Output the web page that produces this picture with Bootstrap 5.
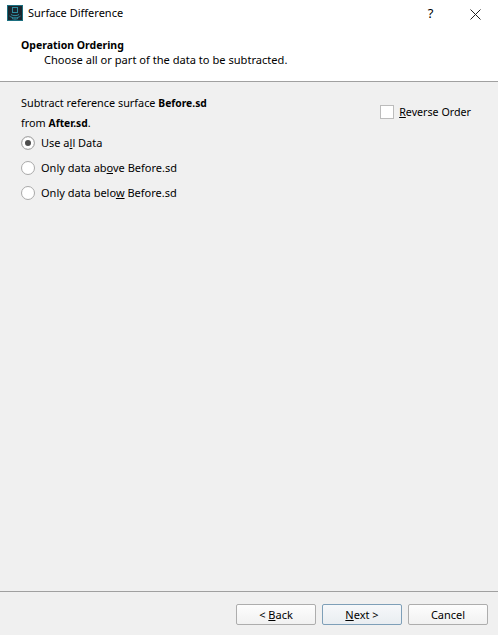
<!DOCTYPE html>
<html lang="en-US">
<head>
    <meta charset="UTF-8">
    <meta name="viewport" content="width=device-width, initial-scale=1.0">
    <title>Surface Difference</title>
    <link href="https://cdn.jsdelivr.net/npm/bootstrap@5.3.3/dist/css/bootstrap.min.css" rel="stylesheet">
    <style>
        html, body {
            height: 100%;
        }
        body {
            background-color: #f0f0f0;
            color: #000;
            font-family: "Noto Sans", "Open Sans", sans-serif;
            font-size: 11px;
            line-height: 16px;
        }
        .dlg {
            height: 635px;
        }
        .dlg-head {
            height: 82px;
            background-color: #fff;
            border-bottom: 1px solid #a0a0a0;
        }
        .title-row {
            height: 26px;
            padding-left: 7px;
            font-size: 11px;
        }
        .win-btn {
            width: 45px;
            text-align: center;
            font-size: 13px;
        }
        .head-text {
            padding-left: 21px;
            padding-top: 11px;
        }
        .head-title {
            font-size: 10.5px;
            font-weight: 700;
        }
        .head-sub {
            padding-left: 23px;
            line-height: 14px;
            font-size: 11.1px;
        }
        .dlg-body {
            padding: 11px 27px 0 21px;
        }
        .ref-text {
            font-size: 10.85px;
            line-height: 19px;
            margin-bottom: -3px;
        }
        .ref-text b {
            font-size: 10.3px;
        }
        .dlg-body .form-check {
            display: flex;
            align-items: center;
            min-height: 0;
            height: 25px;
            padding-left: 0;
            margin: 0;
        }
        .dlg-body .form-check.reverse-box {
            margin-top: 6px;
            font-size: 10.7px;
        }
        .dlg-body .form-check .form-check-input {
            float: none;
            margin: 0 6px 0 0;
            width: 14px;
            height: 14px;
            background-color: #fff;
            border: 1px solid #a9a9a9;
            box-shadow: none;
        }
        .dlg-body .form-check .form-check-input[type=radio]:checked {
            background-image: none;
            background-color: #fff;
            border-color: #a9a9a9;
            box-shadow: inset 0 0 0 3px #fff, inset 0 0 0 7px #4d4d4d;
        }
        .dlg-body .form-check .form-check-input[type=checkbox] {
            border-radius: 0;
            border-color: #bcbcbc;
            margin-right: 5px;
        }
        .dlg-foot {
            height: 44px;
            border-top: 1px solid #a0a0a0;
            padding: 12px 10px 0 0;
            column-gap: 6px;
        }
        .wiz-btn {
            width: 80px;
            height: 21px;
            padding: 0;
            font-size: 11px;
            line-height: 17px;
            color: #000;
            background: linear-gradient(#fdfdfd, #f1f1f1);
            border: 1px solid #adadad;
            border-radius: 2px;
        }
        .wiz-btn.is-default {
            border-color: #7e9fb8;
            background: linear-gradient(#f6f8fa, #e9edf1);
        }
        .title-icon {
            margin-right: 5px;
        }
    </style>
</head>
<body>
    <div class="dlg d-flex flex-column">
        <!-- Title and page header -->
        <div class="dlg-head">
            <div class="title-row d-flex align-items-center">
                <svg width="16" height="16" viewBox="0 0 16 16" class="title-icon flex-shrink-0">
                    <rect width="16" height="16" fill="#1b6f80"/>
                    <rect x="1" y="1" width="14" height="14" fill="#1a262e"/>
                    <rect x="5.500" y="2.500" width="5" height="5" fill="none" stroke="#2f8ea0"/>
                    <path d="M4 9.500c2 1.500 6 1.500 8 0M2.500 11c3 2.500 8 2.500 11 0M5 13.500c2 .8 4 .8 6 0" fill="none" stroke="#2f8ea0"/>
                </svg>
                <span class="flex-grow-1">Surface Difference</span>
                <span class="win-btn">?</span>
                <span class="win-btn">
                    <svg width="11" height="11" viewBox="0 0 11 11"><path d="M.5.500l10 10M10.500.500l-10 10" stroke="#222" fill="none"/></svg>
                </span>
            </div>
            <div class="head-text">
                <div class="head-title">Operation Ordering</div>
                <div class="head-sub">Choose all or part of the data to be subtracted.</div>
            </div>
        </div>

        <!-- Options -->
        <div class="dlg-body flex-grow-1 d-flex justify-content-between">
            <div>
                <div class="ref-text">Subtract reference surface <b>Before.sd</b><br>from <b>After.sd</b>.</div>
                <div class="form-check">
                    <input class="form-check-input" type="radio" name="dataPart" id="useAll" checked>
                    <label class="form-check-label" for="useAll">Use a<u>l</u>l Data</label>
                </div>
                <div class="form-check">
                    <input class="form-check-input" type="radio" name="dataPart" id="above">
                    <label class="form-check-label" for="above">Only data ab<u>o</u>ve Before.sd</label>
                </div>
                <div class="form-check">
                    <input class="form-check-input" type="radio" name="dataPart" id="below">
                    <label class="form-check-label" for="below">Only data belo<u>w</u> Before.sd</label>
                </div>
            </div>
            <div class="form-check reverse-box">
                <input class="form-check-input" type="checkbox" id="reverse">
                <label class="form-check-label" for="reverse"><u>R</u>everse Order</label>
            </div>
        </div>

        <!-- Wizard buttons -->
        <div class="dlg-foot d-flex justify-content-end">
            <button class="btn wiz-btn">&lt; <u>B</u>ack</button>
            <button class="btn wiz-btn is-default"><u>N</u>ext &gt;</button>
            <button class="btn wiz-btn">Cancel</button>
        </div>
    </div>

    <script src="https://cdn.jsdelivr.net/npm/bootstrap@5.3.3/dist/js/bootstrap.bundle.min.js"></script>
</body>
</html>
